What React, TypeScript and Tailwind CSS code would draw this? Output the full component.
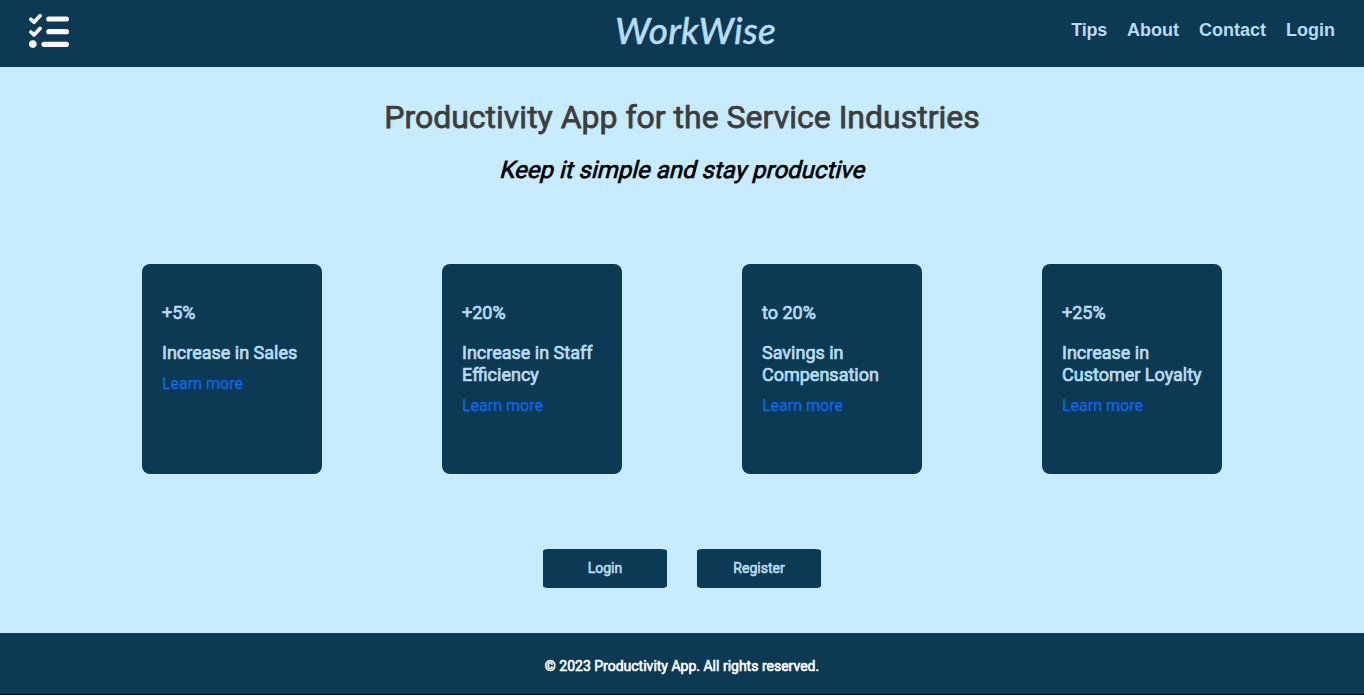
const navLinks = ["Tips", "About", "Contact", "Login"];

const benefits = [
  { figure: "+5%", label: "Increase in Sales" },
  { figure: "+20%", label: "Increase in Staff Efficiency" },
  { figure: "to 20%", label: "Savings in Compensation" },
  { figure: "+25%", label: "Increase in Customer Loyalty" },
];

function ChecklistIcon() {
  return (
    <svg
      viewBox="0 0 40 36"
      className="mb-[5px] h-9 w-10"
      fill="none"
      stroke="#fff5f3"
      strokeLinecap="round"
      strokeLinejoin="round"
    >
      <path strokeWidth="3.7" d="M1.9 6.3 5 9.2 11 2.7M1.9 19 5 21.9l6-6.5" />
      <path strokeWidth="5.2" d="M19.8 6h17.6M19.8 18.7h17.6M15 31.3h22.4" />
      <circle cx="3.8" cy="31.1" r="3.8" fill="#fff5f3" stroke="none" />
    </svg>
  );
}

function Header() {
  return (
    <header className="grid h-[67px] grid-cols-[1fr_auto_1fr] items-center bg-[#0c3953] px-[29px]">
      <ChecklistIcon />
      <h1 className="mb-2 ml-[26px] w-[160px] font-['Lato'] text-[37px] leading-none font-medium tracking-[0.2px] whitespace-nowrap text-[#b9dcf2] italic [-webkit-text-stroke:0.4px_#b9dcf2]">
        WorkWise
      </h1>
      <nav className="mb-[7px] flex justify-end gap-5 font-['Liberation_Sans'] text-lg leading-[22px] font-bold text-[#b9dcf2]">
        {navLinks.map((link) => (
          <a key={link} href="#" className="first:tracking-[-0.25px]">{link}</a>
        ))}
      </nav>
    </header>
  );
}

function BenefitCard({ figure, label }: { figure: string; label: string }) {
  return (
    <article className="h-[210px] w-[180px] rounded-lg bg-[#0c3953] px-5 pt-[38px]">
      <div className="text-lg leading-[22px] text-[#b9dcf2] [-webkit-text-stroke:0.7px_#b9dcf2]">
        <p>{figure}</p>
        <h3 className="mt-[18px]">{label}</h3>
      </div>
      <a href="#" className="mt-2 block text-base leading-6 text-[#0070ff]">
        Learn more
      </a>
    </article>
  );
}

function ActionButton({ label }: { label: string }) {
  return (
    <button className="h-[39px] w-[124px] rounded-[5%] bg-[#0c3953] pb-px text-sm text-[#b9dcf2] [-webkit-text-stroke:0.6px_#b9dcf2]">
      {label}
    </button>
  );
}

export default function App() {
  return (
    <div className="flex h-[695px] flex-col border-b border-black bg-[#c7ebff] font-['Roboto',sans-serif]">
      <Header />
      <main className="flex flex-1 flex-col items-center">
        <h2 className="mt-[30px] text-[32px] leading-10 text-[#3d3d3d] [-webkit-text-stroke:0.75px_#3d3d3d]">
          Productivity App for the Service Industries
        </h2>
        <p className="mt-[18px] ml-1 -skew-x-[14deg] text-2xl leading-[30px] text-black [-webkit-text-stroke:0.7px_#000]">
          Keep it simple and stay productive
        </p>
        <section className="mt-[79px] flex gap-[120px]">
          {benefits.map((benefit) => (
            <BenefitCard key={benefit.figure} {...benefit} />
          ))}
        </section>
        <div className="mt-[75px] flex gap-[30px]">
          <ActionButton label="Login" />
          <ActionButton label="Register" />
        </div>
      </main>
      <footer className="flex h-[61px] items-center justify-center bg-[#0c3953] pt-[5px] text-sm text-white [-webkit-text-stroke:0.6px_#fff]">
        © 2023 Productivity App. All rights reserved.
      </footer>
    </div>
  );
}
